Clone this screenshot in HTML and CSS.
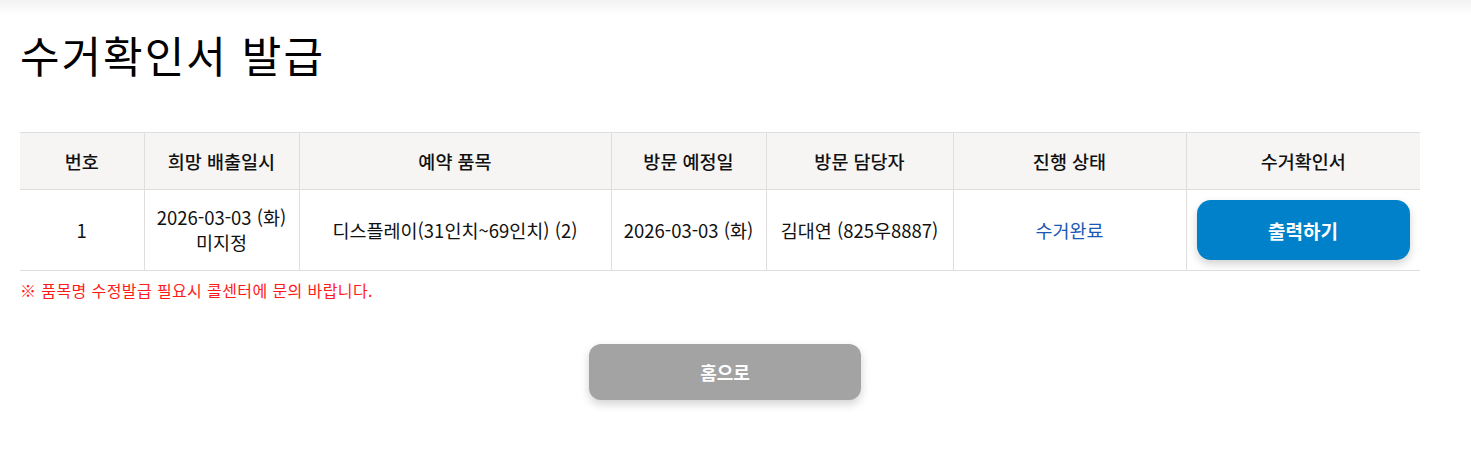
FILE: index.html
```html
<!DOCTYPE html>
<html lang="ko">
<head>
<meta charset="utf-8">
<title>수거확인서 발급</title>
<link rel="stylesheet" href="styles.css">
</head>
<body>
<div class="topshade"></div>
<main class="page">
  <h1 class="title">수거확인서 발급</h1>
  <table class="grid">
    <colgroup>
      <col style="width:124px"><col style="width:155px"><col style="width:312px"><col style="width:155px"><col style="width:187px"><col style="width:233px"><col style="width:234px">
    </colgroup>
    <thead>
      <tr>
        <th>번호</th>
        <th>희망 배출일시</th>
        <th>예약 품목</th>
        <th>방문 예정일</th>
        <th>방문 담당자</th>
        <th>진행 상태</th>
        <th>수거확인서</th>
      </tr>
    </thead>
    <tbody>
      <tr>
        <td>1</td>
        <td>2026-03-03 (화)<br>미지정</td>
        <td>디스플레이(31인치~69인치) (2)</td>
        <td>2026-03-03 (화)</td>
        <td>김대연 (825우8887)</td>
        <td class="status">수거완료</td>
        <td class="action"><button class="btn-print">출력하기</button></td>
      </tr>
    </tbody>
  </table>
  <p class="note">※ 품목명 수정발급 필요시 콜센터에 문의 바랍니다.</p>
  <div class="actions">
    <button class="btn-home">홈으로</button>
  </div>
</main>
</body>
</html>
```

FILE: styles.css
```css
html, body {
  margin: 0;
  padding: 0;
  background: #fff;
}
body {
  font-family: "Noto Sans CJK KR", "Noto Sans", sans-serif;
  color: #111;
}
.topshade {
  height: 16px;
  background: linear-gradient(to bottom, #f2f2f2 0%, #fafafa 60%, #ffffff 100%);
}
.page {
  width: 1410px;
  padding: 14px 20px 0 20px;
  box-sizing: content-box;
}
.title {
  margin: 0;
  font-size: 43px;
  font-weight: 400;
  line-height: 48px;
  color: #000;
  letter-spacing: 2px;
}
.grid {
  margin-top: 54px;
  width: 1400px;
  border-collapse: collapse;
  table-layout: fixed;
  font-size: 18.5px;
}
.grid th, .grid td {
  border: 1px solid #dedede;
  text-align: center;
  padding: 0 2px;
  color: #111;
}
.grid tr > :first-child { border-left: none; }
.grid tr > :last-child { border-right: none; }
.grid th {
  background: #f6f5f3;
  font-weight: 500;
  height: 56px;
}
.grid td {
  font-weight: 400;
  height: 80px;
  line-height: 25px;
}
.grid td.status { color: #1a58b5; }
.grid td.action { padding: 0 10px; }
.btn-print {
  width: 213px;
  height: 60px;
  border: none;
  border-radius: 14px;
  background: #0081c9;
  color: #fff;
  font-family: inherit;
  font-size: 19px;
  font-weight: 700;
  box-shadow: 0 4px 8px rgba(0,0,0,0.18);
  display: block;
}
.note {
  margin: 8px 0 0 0;
  font-size: 16px;
  line-height: 22px;
  font-weight: 400;
  letter-spacing: 0.4px;
  color: #ff1a1a;
}
.actions {
  display: flex;
  justify-content: center;
  margin-top: 43px;
  padding-bottom: 20px;
}
.btn-home {
  width: 272px;
  height: 56px;
  border: none;
  border-radius: 12px;
  background: #a3a3a3;
  color: #fff;
  font-family: inherit;
  font-size: 18px;
  font-weight: 700;
  box-shadow: 0 4px 10px rgba(0,0,0,0.18);
}
```
